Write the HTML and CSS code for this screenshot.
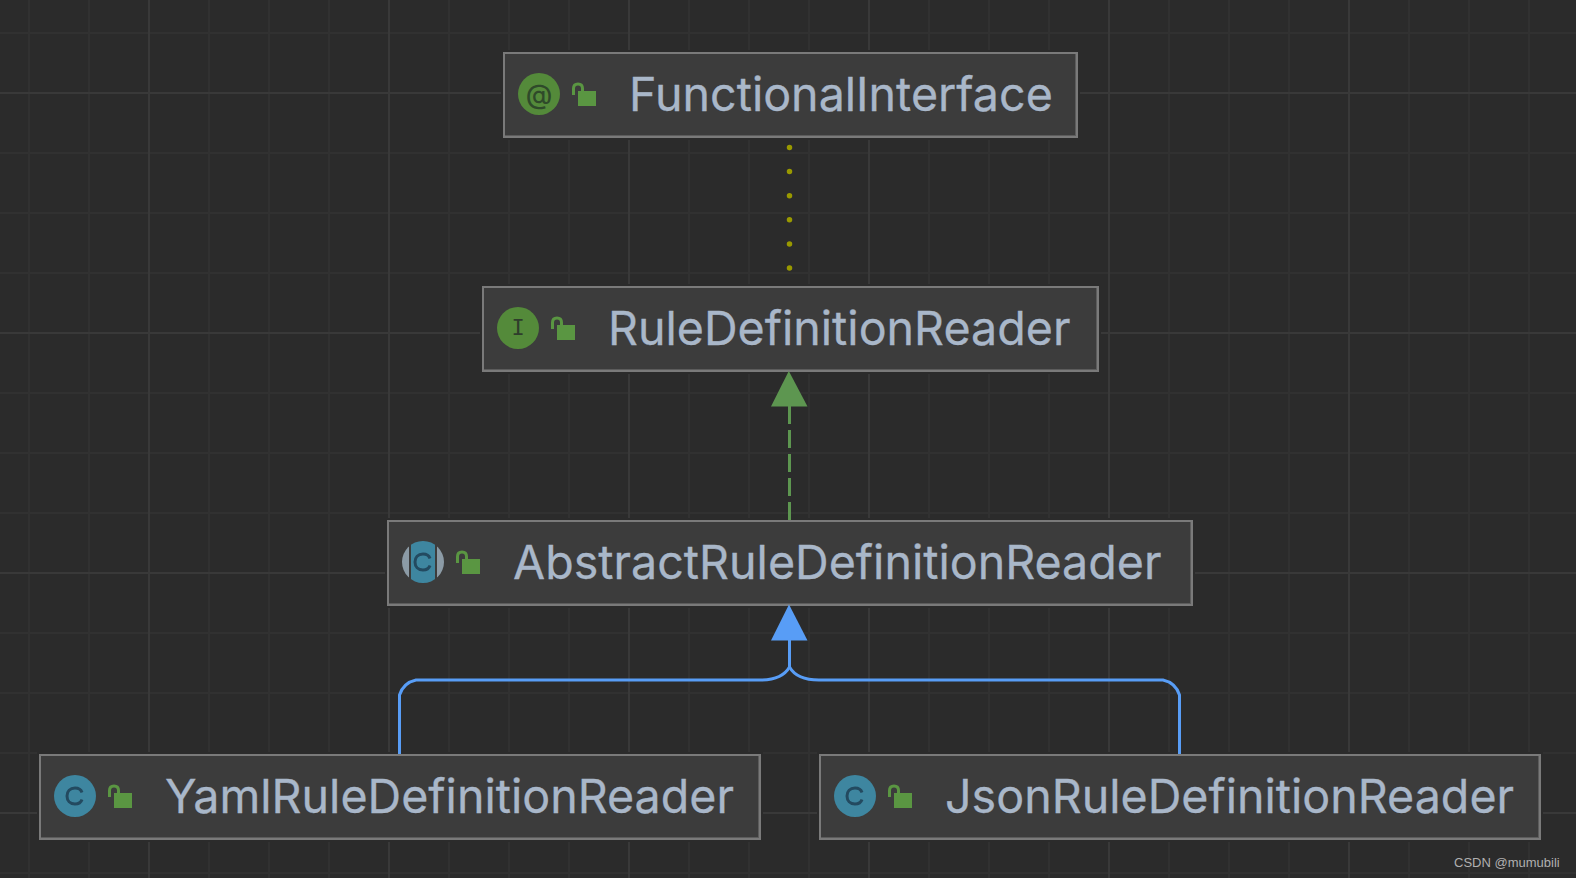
FILE: index.html
```html
<!DOCTYPE html>
<html lang="en">
<head>
<meta charset="utf-8">
<title>Class diagram</title>
<link rel="stylesheet" href="styles.css">
</head>
<body>
<main class="canvas">
  <div class="node node-annotation">
    <span class="badge badge-green"><span class="at">@</span></span>
    <svg class="lock" width="28" height="27" viewBox="0 0 28 27"><path class="shackle" d="M1.500 13V6.500C1.500 3.500 3.500 2 6 2S10.500 3.500 10.500 6.500V9"/><rect class="lock-body" x="6" y="9" width="18" height="15"/></svg>
    <span class="label">FunctionalInterface</span>
  </div>

  <div class="node node-interface">
    <span class="badge badge-green"><span class="serif-i">I</span></span>
    <svg class="lock" width="28" height="27" viewBox="0 0 28 27"><path class="shackle" d="M1.500 13V6.500C1.500 3.500 3.500 2 6 2S10.500 3.500 10.500 6.500V9"/><rect class="lock-body" x="6" y="9" width="18" height="15"/></svg>
    <span class="label">RuleDefinitionReader</span>
  </div>

  <div class="node node-abstract">
    <span class="badge badge-abstract"><svg class="c-mark" width="42" height="42" viewBox="0 0 42 42" fill="none"><path d="M28 17.500C27 14.500 24.500 13 21 13C16 13 13 16.500 13 21S16 29 21 29C24.500 29 27 27.500 28 24.500"/></svg></span>
    <svg class="lock" width="28" height="27" viewBox="0 0 28 27"><path class="shackle" d="M1.500 13V6.500C1.500 3.500 3.500 2 6 2S10.500 3.500 10.500 6.500V9"/><rect class="lock-body" x="6" y="9" width="18" height="15"/></svg>
    <span class="label">AbstractRuleDefinitionReader</span>
  </div>

  <div class="node node-yaml">
    <span class="badge badge-blue"><svg class="c-mark" width="42" height="42" viewBox="0 0 42 42" fill="none"><path d="M28 17.500C27 14.500 24.500 13 21 13C16 13 13 16.500 13 21S16 29 21 29C24.500 29 27 27.500 28 24.500"/></svg></span>
    <svg class="lock" width="28" height="27" viewBox="0 0 28 27"><path class="shackle" d="M1.500 13V6.500C1.500 3.500 3.500 2 6 2S10.500 3.500 10.500 6.500V9"/><rect class="lock-body" x="6" y="9" width="18" height="15"/></svg>
    <span class="label">YamlRuleDefinitionReader</span>
  </div>

  <div class="node node-json">
    <span class="badge badge-blue"><svg class="c-mark" width="42" height="42" viewBox="0 0 42 42" fill="none"><path d="M28 17.500C27 14.500 24.500 13 21 13C16 13 13 16.500 13 21S16 29 21 29C24.500 29 27 27.500 28 24.500"/></svg></span>
    <svg class="lock" width="28" height="27" viewBox="0 0 28 27"><path class="shackle" d="M1.500 13V6.500C1.500 3.500 3.500 2 6 2S10.500 3.500 10.500 6.500V9"/><rect class="lock-body" x="6" y="9" width="18" height="15"/></svg>
    <span class="label">JsonRuleDefinitionReader</span>
  </div>

  <svg class="edges" width="1576" height="878" viewBox="0 0 1576 878" fill="none">
    <path class="dots" d="M789.500 147.500V271"/>
    <path class="dash" d="M789.500 406V520"/>
    <path class="tri-green" d="M788.800 371L771 406.500H807.500Z"/>
    <path class="solid" d="M789.500 640V667C785 675 776 680 760 680H416C407 682 402 687 399.500 695V754"/>
    <path class="solid" d="M789.500 667C794 675 803 680 819 680H1163C1172 682 1177 687 1179.500 695V754"/>
    <path class="tri-blue" d="M789 604.500L771 640.500H807.500Z"/>
  </svg>

  <div class="watermark">CSDN @mumubili</div>
</main>
</body>
</html>
```
FILE: styles.css
```css
* { box-sizing: border-box; }
html, body { margin: 0; padding: 0; overflow: hidden; }
.canvas {
  position: relative;
  width: 1576px;
  height: 878px;
  background-color: #2b2b2b;
  background-image:
    linear-gradient(to right, #393939 2px, transparent 2px),
    linear-gradient(to bottom, #393939 2px, transparent 2px),
    linear-gradient(to right, #313131 2px, transparent 2px),
    linear-gradient(to bottom, #313131 2px, transparent 2px);
  background-size: 240px 100%, 100% 240px, 60px 100%, 100% 60px;
  background-position: 148px 0, 0 92px, 28px 0, 0 32px;
  font-family: Inter, "Liberation Sans", sans-serif;
}
.edges { position: absolute; left: 0; top: 0; }
.dots { stroke: #999900; stroke-width: 5.500; stroke-linecap: round; stroke-dasharray: 0 24.100; }
.dash { stroke: #5d9650; stroke-width: 3; stroke-dasharray: 18 6; }
.tri-green { fill: #5d9650; }
.solid { stroke: #589df6; stroke-width: 3; }
.tri-blue { fill: #589df6; }

.node {
  position: absolute;
  top: 754px;
  height: 86px;
  display: flex;
  align-items: center;
  padding-left: 13px;
  background: #3c3c3c;
  border: 2px solid #7a7a7a;
  box-shadow: 0 0 0 2px #2b2b2b, inset -1px -1px 0 #5c5c5c;
}
.node-annotation { left: 503px; width: 575px; top: 52px; }
.node-interface { left: 482px; width: 617px; top: 286px; }
.node-abstract { left: 387px; width: 806px; top: 520px; }
.node-yaml { left: 39px; width: 722px; }
.node-json { left: 819px; width: 722px; }

.badge {
  flex: none;
  position: relative;
  width: 42px;
  height: 42px;
  margin-top: -2px;
  border-radius: 50%;
  display: flex;
  align-items: center;
  justify-content: center;
  overflow: hidden;
}
.badge-green { background: #548a3a; }
.badge-blue { background: #3e86a0; }
.badge-abstract {
  background: linear-gradient(to right,
    #8c9ba6 0, #8c9ba6 7px, #3c3c3c 7px, #3c3c3c 9px,
    #3e86a0 9px, #3e86a0 33px,
    #3c3c3c 33px, #3c3c3c 35px, #8c9ba6 35px);
}
.at { font-family: Inter, sans-serif; font-size: 27px; line-height: 1; color: #2f4a2a; font-weight: 500; }
.serif-i { font-family: "DejaVu Sans Mono", monospace; font-size: 22px; line-height: 1; color: #2f3d2c; font-weight: 400; }
.c-mark { stroke: #234a60; stroke-width: 3; }
.lock { flex: none; margin-left: 12px; margin-top: 1px; }
.shackle { stroke: #5a9642; stroke-width: 3; fill: none; }
.lock-body { fill: #5a9642; }
.label {
  margin-left: 29px;
  margin-top: -1px;
  font-size: 46.600px;
  font-weight: 400;
  -webkit-text-stroke: 0.300px #a9b7c9;
  line-height: 1;
  color: #a9b7c9;
  white-space: nowrap;
}
.watermark {
  position: absolute;
  left: 1454px;
  top: 855px;
  font-size: 13px;
  line-height: 16px;
  color: #b0b0b0;
  white-space: nowrap;
  font-family: "Liberation Sans", sans-serif;
}
```
